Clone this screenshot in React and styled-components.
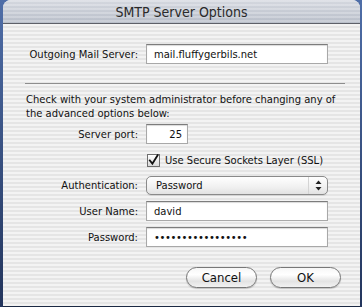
import React from 'react'
import styled, { createGlobalStyle } from 'styled-components'

const GlobalStyle = createGlobalStyle`
  html, body {
    margin: 0;
    padding: 0;
    background: #34548c;
  }
  body {
    width: 362px;
    height: 307px;
    overflow: hidden;
    font-family: "DejaVu Sans Condensed", "Liberation Sans", sans-serif;
  }
`

const Frame = styled.div`
  width: 362px;
  height: 307px;
  box-sizing: border-box;
  padding: 0 2px 1px 3px;
  background: linear-gradient(#4f6ea8, #23355c);
`

const Window = styled.div`
  height: 100%;
  display: flex;
  flex-direction: column;
  border-radius: 8px 8px 0 0;
  overflow: hidden;
  background: repeating-linear-gradient(#f3f3f3 0 2px, #e5e5e5 2px 4px);
  border-bottom: 2px solid #1c2a44;
`

const TitleBar = styled.div`
  height: 23px;
  flex: none;
  display: flex;
  align-items: center;
  justify-content: center;
  background:
    repeating-linear-gradient(rgba(255,255,255,0.18) 0 2px, rgba(0,0,0,0.02) 2px 4px),
    linear-gradient(#d9dce3, #bcc2cd);
  border-bottom: 1px solid #5d6068;
  color: #2a2a2a;
  font-size: 14px;
`

const Body = styled.div`
  flex: 1;
  display: flex;
  flex-direction: column;
  padding: 20px 19px 0 22px;
  font-size: 11.1px;
  color: #111;
  white-space: nowrap;
`

const FieldGrid = styled.div`
  display: grid;
  grid-template-columns: 113px 182px;
  column-gap: 8px;
  row-gap: ${p => p.$gap || 6}px;
  align-items: center;
`

const Label = styled.label`
  text-align: right;
`

const TextField = styled.div`
  box-sizing: border-box;
  height: 20px;
  width: ${p => p.$width || '182px'};
  display: flex;
  align-items: center;
  justify-content: ${p => (p.$right ? 'flex-end' : 'flex-start')};
  padding: 0 ${p => (p.$right ? '5px' : '0')} 0 ${p => (p.$right ? '0' : '7px')};
  background: #fff;
  border: 1px solid #a8a8a8;
  border-top-color: #7c7c7c;
  box-shadow: inset 0 1px 1px rgba(0,0,0,0.15);
  letter-spacing: ${p => p.$spacing || 'normal'};
`

const Separator = styled.hr`
  margin: 19px 0 9px 0;
  border: none;
  border-top: 1px solid #8d8d8d;
  width: 320px;
`

const Note = styled.p`
  margin: 0 0 3px 1px;
  line-height: 14px;
`

const CheckRow = styled.div`
  grid-column: 2;
  display: flex;
  align-items: center;
  gap: 5px;
  padding-left: 1px;
  height: 20px;
`

const Box = styled.span`
  width: 13px;
  height: 13px;
  box-sizing: border-box;
  border: 1px solid #6e6e6e;
  background: linear-gradient(#ffffff, #d8d8d8);
  display: flex;
  align-items: center;
  justify-content: center;
`

const Popup = styled.div`
  box-sizing: border-box;
  height: 19px;
  width: 182px;
  display: flex;
  align-items: center;
  border: 1px solid #8a8a8a;
  border-radius: 5px;
  background: linear-gradient(#ffffff, #f0f0f0 60%, #e2e2e2);
  box-shadow: 0 1px 0 rgba(0,0,0,0.08);
`

const PopupText = styled.span`
  flex: 1;
  padding-left: 9px;
`

const PopupArrows = styled.span`
  width: 18px;
  height: 100%;
  display: flex;
  align-items: center;
  justify-content: center;
  border-left: 1px solid #d4d4d4;
`

const ButtonRow = styled.div`
  display: flex;
  justify-content: flex-end;
  gap: 13px;
  margin-top: 20px;
`

const Button = styled.button`
  width: 71px;
  height: 21px;
  border-radius: 11px;
  border: 1px solid #777;
  background: linear-gradient(#f6f6f6, #ffffff 35%, #e3e3e3 70%, #f2f2f2);
  box-shadow: 0 1px 1px rgba(0,0,0,0.2);
  font-family: inherit;
  font-size: 13px;
  color: #111;
  padding: 0;
`

const CheckMark = () => (
  <svg width="12" height="12" viewBox="0 0 12 12">
    <path d="M2 6.5 L4.8 10 L10.5 0.8" fill="none" stroke="#111" strokeWidth="2" strokeLinecap="square" />
  </svg>
)

const Arrows = () => (
  <svg width="7" height="11" viewBox="0 0 7 11">
    <path d="M3.5 0.5 L6.5 4 L0.5 4 Z" fill="#222" />
    <path d="M3.5 10.5 L6.5 7 L0.5 7 Z" fill="#222" />
  </svg>
)

const App = () => (
  <>
    <GlobalStyle />
    <Frame>
      <Window>
        <TitleBar>SMTP Server Options</TitleBar>
        <Body>
          <FieldGrid>
            <Label>Outgoing Mail Server:</Label>
            <TextField>mail.fluffygerbils.net</TextField>
          </FieldGrid>
          <Separator />
          <Note>
            Check with your system administrator before changing any of
            <br />
            the advanced options below:
          </Note>
          <FieldGrid $gap={6}>
            <Label>Server port:</Label>
            <TextField $width="42px" $right>25</TextField>
            <CheckRow>
              <Box><CheckMark /></Box>
              Use Secure Sockets Layer (SSL)
            </CheckRow>
            <Label>Authentication:</Label>
            <Popup>
              <PopupText>Password</PopupText>
              <PopupArrows><Arrows /></PopupArrows>
            </Popup>
            <Label>User Name:</Label>
            <TextField>david</TextField>
            <Label>Password:</Label>
            <TextField $spacing="-0.4px">•••••••••••••••••</TextField>
          </FieldGrid>
          <ButtonRow>
            <Button>Cancel</Button>
            <Button>OK</Button>
          </ButtonRow>
        </Body>
      </Window>
    </Frame>
  </>
)

export default App
